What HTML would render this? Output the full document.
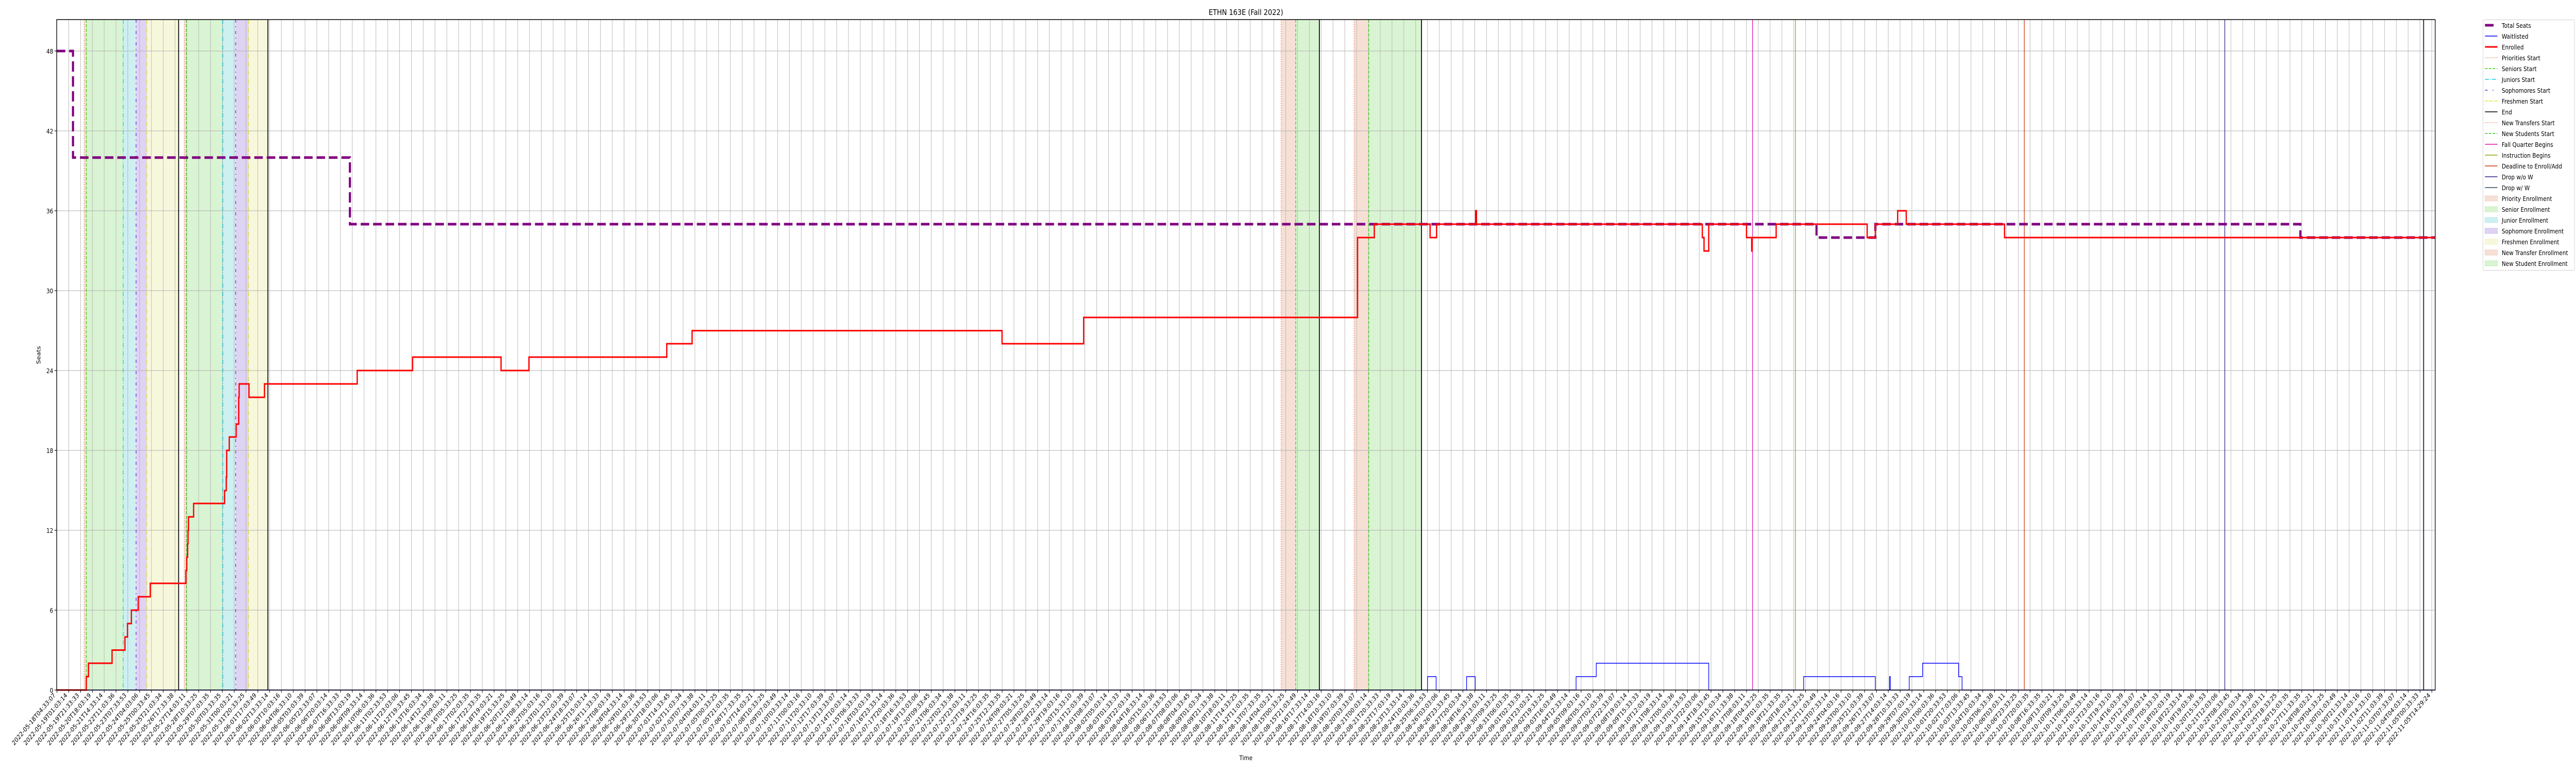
<!DOCTYPE html>
<html><head><meta charset="utf-8"><style>
html,body{margin:0;padding:0;background:#fff;overflow:hidden;width:100%;height:100%;}
svg{display:block;position:absolute;left:0;top:0;width:100vw;height:100vh;}
text{font-family:"DejaVu Sans","Liberation Sans",sans-serif;font-size:12.6px;fill:#000;}
</style></head><body>
<svg viewBox="0 0 6000 1500" preserveAspectRatio="none">
<defs>
<pattern id="vg" x="132" y="0" width="27.52" height="1500" patternUnits="userSpaceOnUse"><rect x="0" y="0" width="1" height="1500" fill="#b0b0b0"/></pattern>
<pattern id="vt" x="132" y="0" width="27.52" height="1500" patternUnits="userSpaceOnUse"><rect x="0" y="0" width="1.2" height="1500" fill="#000"/></pattern>
</defs>
<rect x="0" y="0" width="6000" height="1500" fill="#fff"/>
<g>
<rect x="196" y="38" width="5" height="1301" fill="#f6e0d6"/>
<rect x="201" y="38" width="86" height="1301" fill="#d9f4d2"/>
<rect x="287" y="38" width="30" height="1301" fill="#cdf0f1"/>
<rect x="317" y="38" width="25" height="1301" fill="#dfd3f3"/>
<rect x="342" y="38" width="74" height="1301" fill="#f7f8db"/>
<rect x="429" y="38" width="5" height="1301" fill="#f6e0d6"/>
<rect x="434" y="38" width="85" height="1301" fill="#d9f4d2"/>
<rect x="519" y="38" width="30" height="1301" fill="#cdf0f1"/>
<rect x="549" y="38" width="30" height="1301" fill="#dfd3f3"/>
<rect x="579" y="38" width="45" height="1301" fill="#f7f8db"/>
<rect x="2984" y="38" width="34" height="1301" fill="#f6e0d6"/>
<rect x="3018" y="38" width="55" height="1301" fill="#d9f4d2"/>
<rect x="3154" y="38" width="34" height="1301" fill="#f6e0d6"/>
<rect x="3188" y="38" width="123" height="1301" fill="#d9f4d2"/>
</g>
<rect x="132" y="38" width="5540" height="1301" fill="url(#vg)"/>
<g stroke="#b0b0b0" stroke-width="1">
<line x1="132" y1="1184" x2="5672" y2="1184"/>
<line x1="132" y1="1029" x2="5672" y2="1029"/>
<line x1="132" y1="874" x2="5672" y2="874"/>
<line x1="132" y1="719" x2="5672" y2="719"/>
<line x1="132" y1="564" x2="5672" y2="564"/>
<line x1="132" y1="409" x2="5672" y2="409"/>
<line x1="132" y1="254" x2="5672" y2="254"/>
<line x1="132" y1="99" x2="5672" y2="99"/>
</g>
<g fill="none" stroke-width="1.5">
<line x1="196" y1="38" x2="196" y2="1339" stroke="#ee6633" stroke-dasharray="1.5 3"/>
<line x1="201" y1="38" x2="201" y2="1339" stroke="#33cc11" stroke-dasharray="6 3"/>
<line x1="287" y1="38" x2="287" y2="1339" stroke="#11ccdd" stroke-dasharray="9 3 1.5 3"/>
<line x1="317" y1="38" x2="317" y2="1339" stroke="#6622dd" stroke-dasharray="6 7 2 7"/>
<line x1="342" y1="38" x2="342" y2="1339" stroke="#dddd22" stroke-dasharray="9 3 1.5 3"/>
<line x1="416" y1="38" x2="416" y2="1339" stroke="#000" stroke-width="2"/>
<line x1="429" y1="38" x2="429" y2="1339" stroke="#ee6633" stroke-dasharray="1.5 3"/>
<line x1="434" y1="38" x2="434" y2="1339" stroke="#33cc11" stroke-dasharray="6 3"/>
<line x1="519" y1="38" x2="519" y2="1339" stroke="#11ccdd" stroke-dasharray="9 3 1.5 3"/>
<line x1="549" y1="38" x2="549" y2="1339" stroke="#6622dd" stroke-dasharray="6 7 2 7"/>
<line x1="579" y1="38" x2="579" y2="1339" stroke="#dddd22" stroke-dasharray="9 3 1.5 3"/>
<line x1="624" y1="38" x2="624" y2="1339" stroke="#000" stroke-width="2"/>
<line x1="2984" y1="38" x2="2984" y2="1339" stroke="#ee6633" stroke-dasharray="1.5 3"/>
<line x1="3018" y1="38" x2="3018" y2="1339" stroke="#33cc11" stroke-dasharray="6 3"/>
<line x1="3073" y1="38" x2="3073" y2="1339" stroke="#000" stroke-width="2"/>
<line x1="3154" y1="38" x2="3154" y2="1339" stroke="#ee6633" stroke-dasharray="1.5 3"/>
<line x1="3188" y1="38" x2="3188" y2="1339" stroke="#33cc11" stroke-dasharray="6 3"/>
<line x1="3311" y1="38" x2="3311" y2="1339" stroke="#000" stroke-width="2"/>
<line x1="4082" y1="38" x2="4082" y2="1339" stroke="#dd11aa"/>
<line x1="4182" y1="38" x2="4182" y2="1339" stroke="#88aa11"/>
<line x1="4715" y1="38" x2="4715" y2="1339" stroke="#cc3311"/>
<line x1="5182" y1="38" x2="5182" y2="1339" stroke="#332288"/>
<line x1="5645" y1="38" x2="5645" y2="1339" stroke="#334455" stroke-width="2.5"/>
</g>
<path fill="none" stroke="#0000ff" stroke-width="1.5" d="M132 1339H3325V1313H3345V1339H3416V1313H3436V1339H3671V1313H3718V1287H3980V1339H4201V1313H4368V1339H4401V1313H4403V1339H4447V1313H4478V1287H4562V1313H4570V1339H5672"/>
<path fill="none" stroke="#800080" stroke-width="5" stroke-dasharray="20 9" d="M132 99H170V305.8H815V435H4231V461H4368V435H5358V461H5672"/>
<path fill="none" stroke="#ff0000" stroke-width="3" d="M132 1339H201V1313H206V1287H261V1261.5H291V1236H297V1210H306V1184H322V1158H350V1132H433V1107H435V1081H437V1055H438V1029H439V1003H451V977H523V952H527V926H528V874H534V848H550V823H556V771H557V745H580V771H616V745H832V719H961V693H1167V719H1232V693H1553V667H1612V641.6H2334V667H2524V616H3162V461H3201V435H3331V461H3346V435H3437V409H3439V435H3965V461H3969V487H3980V435H4068V461H4080V487H4081V461H4137V435H4349V461H4368V435H4420V409H4440V435H4669V461H5672"/>
<rect x="132" y="38" width="5540" height="1301" fill="none" stroke="#000" stroke-width="1.5"/>
<rect x="132" y="1339" width="5540" height="5" fill="url(#vt)"/>
<g stroke="#000" stroke-width="1.2">
<line x1="127" y1="1339" x2="132" y2="1339"/><line x1="127" y1="1184" x2="132" y2="1184"/><line x1="127" y1="1029" x2="132" y2="1029"/><line x1="127" y1="874" x2="132" y2="874"/><line x1="127" y1="719" x2="132" y2="719"/><line x1="127" y1="564" x2="132" y2="564"/><line x1="127" y1="409" x2="132" y2="409"/><line x1="127" y1="254" x2="132" y2="254"/><line x1="127" y1="99" x2="132" y2="99"/>
</g>
<g text-anchor="end">
<text x="124" y="1344">0</text><text x="124" y="1189">6</text><text x="124" y="1034">12</text><text x="124" y="879">18</text><text x="124" y="724">24</text><text x="124" y="569">30</text><text x="124" y="414">36</text><text x="124" y="259">42</text><text x="124" y="104">48</text>
</g>
<text x="2902" y="29" text-anchor="middle" style="font-size:15.5px">ETHN 163E (Fall 2022)</text>
<text x="2902" y="1475" text-anchor="middle">Time</text>
<text transform="translate(94,689) rotate(-90)" text-anchor="middle">Seats</text>
<rect x="5783.5" y="38.5" width="213" height="486" rx="3" fill="#fff" stroke="#d0d0d0"/>
<line x1="5788" y1="49" x2="5808" y2="49" stroke="#800080" stroke-width="5"/>
<line x1="5788" y1="70" x2="5817" y2="70" stroke="#0000ff" stroke-width="1.5"/>
<line x1="5788" y1="91" x2="5817" y2="91" stroke="#ff0000" stroke-width="3"/>
<line x1="5788" y1="112" x2="5817" y2="112" stroke="#ee6633" stroke-width="1.5" stroke-dasharray="1.5 3"/>
<line x1="5788" y1="133" x2="5817" y2="133" stroke="#33cc11" stroke-width="1.5" stroke-dasharray="6 3"/>
<line x1="5788" y1="154" x2="5817" y2="154" stroke="#11ccdd" stroke-width="1.5" stroke-dasharray="9 3 1.5 3"/>
<line x1="5788" y1="175" x2="5817" y2="175" stroke="#6622dd" stroke-width="1.5" stroke-dasharray="6 12 2 12"/>
<line x1="5788" y1="196" x2="5817" y2="196" stroke="#dddd22" stroke-width="1.5" stroke-dasharray="6 2 1.5 2"/>
<line x1="5788" y1="217" x2="5817" y2="217" stroke="#000" stroke-width="1.5"/>
<line x1="5788" y1="238" x2="5817" y2="238" stroke="#ee6633" stroke-width="1.5" stroke-dasharray="1.5 3"/>
<line x1="5788" y1="259" x2="5817" y2="259" stroke="#33cc11" stroke-width="1.5" stroke-dasharray="6 3"/>
<line x1="5788" y1="280" x2="5817" y2="280" stroke="#dd11aa" stroke-width="1.5"/>
<line x1="5788" y1="301" x2="5817" y2="301" stroke="#88aa11" stroke-width="1.5"/>
<line x1="5788" y1="322" x2="5817" y2="322" stroke="#cc3311" stroke-width="1.5"/>
<line x1="5788" y1="343" x2="5817" y2="343" stroke="#332288" stroke-width="1.5"/>
<line x1="5788" y1="364" x2="5817" y2="364" stroke="#334455" stroke-width="1.5"/>
<rect x="5788" y="380" width="29" height="10" fill="#f6e0d6" stroke="#f2cfc0"/>
<rect x="5788" y="401" width="29" height="10" fill="#d9f4d2" stroke="#c6ecbc"/>
<rect x="5788" y="422" width="29" height="10" fill="#cdf0f1" stroke="#b9e9eb"/>
<rect x="5788" y="443" width="29" height="10" fill="#dfd3f3" stroke="#cfbfee"/>
<rect x="5788" y="464" width="29" height="10" fill="#f7f8db" stroke="#eff0c4"/>
<rect x="5788" y="485" width="29" height="10" fill="#f6e0d6" stroke="#f2cfc0"/>
<rect x="5788" y="506" width="29" height="10" fill="#d9f4d2" stroke="#c6ecbc"/>
<g>
<text x="5827" y="54">Total Seats</text>
<text x="5827" y="75">Waitlisted</text>
<text x="5827" y="96">Enrolled</text>
<text x="5827" y="117">Priorities Start</text>
<text x="5827" y="138">Seniors Start</text>
<text x="5827" y="159">Juniors Start</text>
<text x="5827" y="180">Sophomores Start</text>
<text x="5827" y="201">Freshmen Start</text>
<text x="5827" y="222">End</text>
<text x="5827" y="243">New Transfers Start</text>
<text x="5827" y="264">New Students Start</text>
<text x="5827" y="285">Fall Quarter Begins</text>
<text x="5827" y="306">Instruction Begins</text>
<text x="5827" y="327">Deadline to Enroll/Add</text>
<text x="5827" y="348">Drop w/o W</text>
<text x="5827" y="369">Drop w/ W</text>
<text x="5827" y="390">Priority Enrollment</text>
<text x="5827" y="411">Senior Enrollment</text>
<text x="5827" y="432">Junior Enrollment</text>
<text x="5827" y="453">Sophomore Enrollment</text>
<text x="5827" y="474">Freshmen Enrollment</text>
<text x="5827" y="495">New Transfer Enrollment</text>
<text x="5827" y="516">New Student Enrollment</text>
</g>
<g text-anchor="end">
<g transform="translate(130,1350)">
<text transform="translate(0,0) rotate(-45)">2022-05-18T04:33:07</text>
<text transform="translate(27.5,0) rotate(-45)">2022-05-19T01:03:14</text>
<text transform="translate(55,0) rotate(-45)">2022-05-19T21:33:33</text>
<text transform="translate(82.6,0) rotate(-45)">2022-05-20T18:03:19</text>
<text transform="translate(110.1,0) rotate(-45)">2022-05-21T14:33:14</text>
<text transform="translate(137.6,0) rotate(-45)">2022-05-22T11:03:36</text>
<text transform="translate(165.1,0) rotate(-45)">2022-05-23T07:33:53</text>
<text transform="translate(192.6,0) rotate(-45)">2022-05-24T04:03:06</text>
<text transform="translate(220.2,0) rotate(-45)">2022-05-25T00:33:45</text>
<text transform="translate(247.7,0) rotate(-45)">2022-05-25T21:03:34</text>
</g>
<g transform="translate(405.2,1350)">
<text transform="translate(0,0) rotate(-45)">2022-05-26T17:33:38</text>
<text transform="translate(27.5,0) rotate(-45)">2022-05-27T14:03:11</text>
<text transform="translate(55,0) rotate(-45)">2022-05-28T10:33:25</text>
<text transform="translate(82.6,0) rotate(-45)">2022-05-29T07:03:35</text>
<text transform="translate(110.1,0) rotate(-45)">2022-05-30T03:33:35</text>
<text transform="translate(137.6,0) rotate(-45)">2022-05-31T00:03:21</text>
<text transform="translate(165.1,0) rotate(-45)">2022-05-31T20:33:25</text>
<text transform="translate(192.6,0) rotate(-45)">2022-06-01T17:03:49</text>
<text transform="translate(220.2,0) rotate(-45)">2022-06-02T13:33:14</text>
<text transform="translate(247.7,0) rotate(-45)">2022-06-03T10:03:16</text>
</g>
<g transform="translate(680.4,1350)">
<text transform="translate(0,0) rotate(-45)">2022-06-04T06:33:10</text>
<text transform="translate(27.5,0) rotate(-45)">2022-06-05T03:03:39</text>
<text transform="translate(55,0) rotate(-45)">2022-06-05T23:33:07</text>
<text transform="translate(82.6,0) rotate(-45)">2022-06-06T20:03:14</text>
<text transform="translate(110.1,0) rotate(-45)">2022-06-07T16:33:33</text>
<text transform="translate(137.6,0) rotate(-45)">2022-06-08T13:03:19</text>
<text transform="translate(165.1,0) rotate(-45)">2022-06-09T09:33:14</text>
<text transform="translate(192.6,0) rotate(-45)">2022-06-10T06:03:36</text>
<text transform="translate(220.2,0) rotate(-45)">2022-06-11T02:33:53</text>
<text transform="translate(247.7,0) rotate(-45)">2022-06-11T23:03:06</text>
</g>
<g transform="translate(955.6,1350)">
<text transform="translate(0,0) rotate(-45)">2022-06-12T19:33:45</text>
<text transform="translate(27.5,0) rotate(-45)">2022-06-13T16:03:34</text>
<text transform="translate(55,0) rotate(-45)">2022-06-14T12:33:38</text>
<text transform="translate(82.6,0) rotate(-45)">2022-06-15T09:03:11</text>
<text transform="translate(110.1,0) rotate(-45)">2022-06-16T05:33:25</text>
<text transform="translate(137.6,0) rotate(-45)">2022-06-17T02:03:35</text>
<text transform="translate(165.1,0) rotate(-45)">2022-06-17T22:33:35</text>
<text transform="translate(192.6,0) rotate(-45)">2022-06-18T19:03:21</text>
<text transform="translate(220.2,0) rotate(-45)">2022-06-19T15:33:25</text>
<text transform="translate(247.7,0) rotate(-45)">2022-06-20T12:03:49</text>
</g>
<g transform="translate(1230.8,1350)">
<text transform="translate(0,0) rotate(-45)">2022-06-21T08:33:14</text>
<text transform="translate(27.5,0) rotate(-45)">2022-06-22T05:03:16</text>
<text transform="translate(55,0) rotate(-45)">2022-06-23T01:33:10</text>
<text transform="translate(82.6,0) rotate(-45)">2022-06-23T22:03:39</text>
<text transform="translate(110.1,0) rotate(-45)">2022-06-24T18:33:07</text>
<text transform="translate(137.6,0) rotate(-45)">2022-06-25T15:03:14</text>
<text transform="translate(165.1,0) rotate(-45)">2022-06-26T11:33:33</text>
<text transform="translate(192.6,0) rotate(-45)">2022-06-27T08:03:19</text>
<text transform="translate(220.2,0) rotate(-45)">2022-06-28T04:33:14</text>
<text transform="translate(247.7,0) rotate(-45)">2022-06-29T01:03:36</text>
</g>
<g transform="translate(1506,1350)">
<text transform="translate(0,0) rotate(-45)">2022-06-29T21:33:53</text>
<text transform="translate(27.5,0) rotate(-45)">2022-06-30T18:03:06</text>
<text transform="translate(55,0) rotate(-45)">2022-07-01T14:33:45</text>
<text transform="translate(82.6,0) rotate(-45)">2022-07-02T11:03:34</text>
<text transform="translate(110.1,0) rotate(-45)">2022-07-03T07:33:38</text>
<text transform="translate(137.6,0) rotate(-45)">2022-07-04T04:03:11</text>
<text transform="translate(165.1,0) rotate(-45)">2022-07-05T00:33:25</text>
<text transform="translate(192.6,0) rotate(-45)">2022-07-05T21:03:35</text>
<text transform="translate(220.2,0) rotate(-45)">2022-07-06T17:33:35</text>
<text transform="translate(247.7,0) rotate(-45)">2022-07-07T14:03:21</text>
</g>
<g transform="translate(1781.2,1350)">
<text transform="translate(0,0) rotate(-45)">2022-07-08T10:33:25</text>
<text transform="translate(27.5,0) rotate(-45)">2022-07-09T07:03:49</text>
<text transform="translate(55,0) rotate(-45)">2022-07-10T03:33:14</text>
<text transform="translate(82.6,0) rotate(-45)">2022-07-11T00:03:16</text>
<text transform="translate(110.1,0) rotate(-45)">2022-07-11T20:33:10</text>
<text transform="translate(137.6,0) rotate(-45)">2022-07-12T17:03:39</text>
<text transform="translate(165.1,0) rotate(-45)">2022-07-13T13:33:07</text>
<text transform="translate(192.6,0) rotate(-45)">2022-07-14T10:03:14</text>
<text transform="translate(220.2,0) rotate(-45)">2022-07-15T06:33:33</text>
<text transform="translate(247.7,0) rotate(-45)">2022-07-16T03:03:19</text>
</g>
<g transform="translate(2056.4,1350)">
<text transform="translate(0,0) rotate(-45)">2022-07-16T23:33:14</text>
<text transform="translate(27.5,0) rotate(-45)">2022-07-17T20:03:36</text>
<text transform="translate(55,0) rotate(-45)">2022-07-18T16:33:53</text>
<text transform="translate(82.6,0) rotate(-45)">2022-07-19T13:03:06</text>
<text transform="translate(110.1,0) rotate(-45)">2022-07-20T09:33:45</text>
<text transform="translate(137.6,0) rotate(-45)">2022-07-21T06:03:34</text>
<text transform="translate(165.1,0) rotate(-45)">2022-07-22T02:33:38</text>
<text transform="translate(192.6,0) rotate(-45)">2022-07-22T23:03:11</text>
<text transform="translate(220.2,0) rotate(-45)">2022-07-23T19:33:25</text>
<text transform="translate(247.7,0) rotate(-45)">2022-07-24T16:03:35</text>
</g>
<g transform="translate(2331.6,1350)">
<text transform="translate(0,0) rotate(-45)">2022-07-25T12:33:35</text>
<text transform="translate(27.5,0) rotate(-45)">2022-07-26T09:03:21</text>
<text transform="translate(55,0) rotate(-45)">2022-07-27T05:33:25</text>
<text transform="translate(82.6,0) rotate(-45)">2022-07-28T02:03:49</text>
<text transform="translate(110.1,0) rotate(-45)">2022-07-28T22:33:14</text>
<text transform="translate(137.6,0) rotate(-45)">2022-07-29T19:03:16</text>
<text transform="translate(165.1,0) rotate(-45)">2022-07-30T15:33:10</text>
<text transform="translate(192.6,0) rotate(-45)">2022-07-31T12:03:39</text>
<text transform="translate(220.2,0) rotate(-45)">2022-08-01T08:33:07</text>
<text transform="translate(247.7,0) rotate(-45)">2022-08-02T05:03:14</text>
</g>
<g transform="translate(2606.8,1350)">
<text transform="translate(0,0) rotate(-45)">2022-08-03T01:33:33</text>
<text transform="translate(27.5,0) rotate(-45)">2022-08-03T22:03:19</text>
<text transform="translate(55,0) rotate(-45)">2022-08-04T18:33:14</text>
<text transform="translate(82.6,0) rotate(-45)">2022-08-05T15:03:36</text>
<text transform="translate(110.1,0) rotate(-45)">2022-08-06T11:33:53</text>
<text transform="translate(137.6,0) rotate(-45)">2022-08-07T08:03:06</text>
<text transform="translate(165.1,0) rotate(-45)">2022-08-08T04:33:45</text>
<text transform="translate(192.6,0) rotate(-45)">2022-08-09T01:03:34</text>
<text transform="translate(220.2,0) rotate(-45)">2022-08-09T21:33:38</text>
<text transform="translate(247.7,0) rotate(-45)">2022-08-10T18:03:11</text>
</g>
<g transform="translate(2882,1350)">
<text transform="translate(0,0) rotate(-45)">2022-08-11T14:33:25</text>
<text transform="translate(27.5,0) rotate(-45)">2022-08-12T11:03:35</text>
<text transform="translate(55,0) rotate(-45)">2022-08-13T07:33:35</text>
<text transform="translate(82.6,0) rotate(-45)">2022-08-14T04:03:21</text>
<text transform="translate(110.1,0) rotate(-45)">2022-08-15T00:33:25</text>
<text transform="translate(137.6,0) rotate(-45)">2022-08-15T21:03:49</text>
<text transform="translate(165.1,0) rotate(-45)">2022-08-16T17:33:14</text>
<text transform="translate(192.6,0) rotate(-45)">2022-08-17T14:03:16</text>
<text transform="translate(220.2,0) rotate(-45)">2022-08-18T10:33:10</text>
<text transform="translate(247.7,0) rotate(-45)">2022-08-19T07:03:39</text>
</g>
<g transform="translate(3157.2,1350)">
<text transform="translate(0,0) rotate(-45)">2022-08-20T03:33:07</text>
<text transform="translate(27.5,0) rotate(-45)">2022-08-21T00:03:14</text>
<text transform="translate(55,0) rotate(-45)">2022-08-21T20:33:33</text>
<text transform="translate(82.6,0) rotate(-45)">2022-08-22T17:03:19</text>
<text transform="translate(110.1,0) rotate(-45)">2022-08-23T13:33:14</text>
<text transform="translate(137.6,0) rotate(-45)">2022-08-24T10:03:36</text>
<text transform="translate(165.1,0) rotate(-45)">2022-08-25T06:33:53</text>
<text transform="translate(192.6,0) rotate(-45)">2022-08-26T03:03:06</text>
<text transform="translate(220.2,0) rotate(-45)">2022-08-26T23:33:45</text>
<text transform="translate(247.7,0) rotate(-45)">2022-08-27T20:03:34</text>
</g>
<g transform="translate(3432.4,1350)">
<text transform="translate(0,0) rotate(-45)">2022-08-28T16:33:38</text>
<text transform="translate(27.5,0) rotate(-45)">2022-08-29T13:03:11</text>
<text transform="translate(55,0) rotate(-45)">2022-08-30T09:33:25</text>
<text transform="translate(82.6,0) rotate(-45)">2022-08-31T06:03:35</text>
<text transform="translate(110.1,0) rotate(-45)">2022-09-01T02:33:35</text>
<text transform="translate(137.6,0) rotate(-45)">2022-09-01T23:03:21</text>
<text transform="translate(165.1,0) rotate(-45)">2022-09-02T19:33:25</text>
<text transform="translate(192.6,0) rotate(-45)">2022-09-03T16:03:49</text>
<text transform="translate(220.2,0) rotate(-45)">2022-09-04T12:33:14</text>
<text transform="translate(247.7,0) rotate(-45)">2022-09-05T09:03:16</text>
</g>
<g transform="translate(3707.6,1350)">
<text transform="translate(0,0) rotate(-45)">2022-09-06T05:33:10</text>
<text transform="translate(27.5,0) rotate(-45)">2022-09-07T02:03:39</text>
<text transform="translate(55,0) rotate(-45)">2022-09-07T22:33:07</text>
<text transform="translate(82.6,0) rotate(-45)">2022-09-08T19:03:14</text>
<text transform="translate(110.1,0) rotate(-45)">2022-09-09T15:33:33</text>
<text transform="translate(137.6,0) rotate(-45)">2022-09-10T12:03:19</text>
<text transform="translate(165.1,0) rotate(-45)">2022-09-11T08:33:14</text>
<text transform="translate(192.6,0) rotate(-45)">2022-09-12T05:03:36</text>
<text transform="translate(220.2,0) rotate(-45)">2022-09-13T01:33:53</text>
<text transform="translate(247.7,0) rotate(-45)">2022-09-13T22:03:06</text>
</g>
<g transform="translate(3982.8,1350)">
<text transform="translate(0,0) rotate(-45)">2022-09-14T18:33:45</text>
<text transform="translate(27.5,0) rotate(-45)">2022-09-15T15:03:34</text>
<text transform="translate(55,0) rotate(-45)">2022-09-16T11:33:38</text>
<text transform="translate(82.6,0) rotate(-45)">2022-09-17T08:03:11</text>
<text transform="translate(110.1,0) rotate(-45)">2022-09-18T04:33:25</text>
<text transform="translate(137.6,0) rotate(-45)">2022-09-19T01:03:35</text>
<text transform="translate(165.1,0) rotate(-45)">2022-09-19T21:33:35</text>
<text transform="translate(192.6,0) rotate(-45)">2022-09-20T18:03:21</text>
<text transform="translate(220.2,0) rotate(-45)">2022-09-21T14:33:25</text>
<text transform="translate(247.7,0) rotate(-45)">2022-09-22T11:03:49</text>
</g>
<g transform="translate(4258,1350)">
<text transform="translate(0,0) rotate(-45)">2022-09-23T07:33:14</text>
<text transform="translate(27.5,0) rotate(-45)">2022-09-24T04:03:16</text>
<text transform="translate(55,0) rotate(-45)">2022-09-25T00:33:10</text>
<text transform="translate(82.6,0) rotate(-45)">2022-09-25T21:03:39</text>
<text transform="translate(110.1,0) rotate(-45)">2022-09-26T17:33:07</text>
<text transform="translate(137.6,0) rotate(-45)">2022-09-27T14:03:14</text>
<text transform="translate(165.1,0) rotate(-45)">2022-09-28T10:33:33</text>
<text transform="translate(192.6,0) rotate(-45)">2022-09-29T07:03:19</text>
<text transform="translate(220.2,0) rotate(-45)">2022-09-30T03:33:14</text>
<text transform="translate(247.7,0) rotate(-45)">2022-10-01T00:03:36</text>
</g>
<g transform="translate(4533.2,1350)">
<text transform="translate(0,0) rotate(-45)">2022-10-01T20:33:53</text>
<text transform="translate(27.5,0) rotate(-45)">2022-10-02T17:03:06</text>
<text transform="translate(55,0) rotate(-45)">2022-10-03T13:33:45</text>
<text transform="translate(82.6,0) rotate(-45)">2022-10-04T10:03:34</text>
<text transform="translate(110.1,0) rotate(-45)">2022-10-05T06:33:38</text>
<text transform="translate(137.6,0) rotate(-45)">2022-10-06T03:03:11</text>
<text transform="translate(165.1,0) rotate(-45)">2022-10-06T23:33:25</text>
<text transform="translate(192.6,0) rotate(-45)">2022-10-07T20:03:35</text>
<text transform="translate(220.2,0) rotate(-45)">2022-10-08T16:33:35</text>
<text transform="translate(247.7,0) rotate(-45)">2022-10-09T13:03:21</text>
</g>
<g transform="translate(4808.4,1350)">
<text transform="translate(0,0) rotate(-45)">2022-10-10T09:33:25</text>
<text transform="translate(27.5,0) rotate(-45)">2022-10-11T06:03:49</text>
<text transform="translate(55,0) rotate(-45)">2022-10-12T02:33:14</text>
<text transform="translate(82.6,0) rotate(-45)">2022-10-12T23:03:16</text>
<text transform="translate(110.1,0) rotate(-45)">2022-10-13T19:33:10</text>
<text transform="translate(137.6,0) rotate(-45)">2022-10-14T16:03:39</text>
<text transform="translate(165.1,0) rotate(-45)">2022-10-15T12:33:07</text>
<text transform="translate(192.6,0) rotate(-45)">2022-10-16T09:03:14</text>
<text transform="translate(220.2,0) rotate(-45)">2022-10-17T05:33:33</text>
<text transform="translate(247.7,0) rotate(-45)">2022-10-18T02:03:19</text>
</g>
<g transform="translate(5083.6,1350)">
<text transform="translate(0,0) rotate(-45)">2022-10-18T22:33:14</text>
<text transform="translate(27.5,0) rotate(-45)">2022-10-19T19:03:36</text>
<text transform="translate(55,0) rotate(-45)">2022-10-20T15:33:53</text>
<text transform="translate(82.6,0) rotate(-45)">2022-10-21T12:03:06</text>
<text transform="translate(110.1,0) rotate(-45)">2022-10-22T08:33:45</text>
<text transform="translate(137.6,0) rotate(-45)">2022-10-23T05:03:34</text>
<text transform="translate(165.1,0) rotate(-45)">2022-10-24T01:33:38</text>
<text transform="translate(192.6,0) rotate(-45)">2022-10-24T22:03:11</text>
<text transform="translate(220.2,0) rotate(-45)">2022-10-25T18:33:25</text>
<text transform="translate(247.7,0) rotate(-45)">2022-10-26T15:03:35</text>
</g>
<g transform="translate(5358.8,1350)">
<text transform="translate(0,0) rotate(-45)">2022-10-27T11:33:35</text>
<text transform="translate(27.5,0) rotate(-45)">2022-10-28T08:03:21</text>
<text transform="translate(55,0) rotate(-45)">2022-10-29T04:33:25</text>
<text transform="translate(82.6,0) rotate(-45)">2022-10-30T01:03:49</text>
<text transform="translate(110.1,0) rotate(-45)">2022-10-30T21:33:14</text>
<text transform="translate(137.6,0) rotate(-45)">2022-10-31T18:03:16</text>
<text transform="translate(165.1,0) rotate(-45)">2022-11-01T14:33:10</text>
<text transform="translate(192.6,0) rotate(-45)">2022-11-02T11:03:39</text>
<text transform="translate(220.2,0) rotate(-45)">2022-11-03T07:33:07</text>
<text transform="translate(247.7,0) rotate(-45)">2022-11-04T04:03:14</text>
</g>
<g transform="translate(5634,1350)">
<text transform="translate(0,0) rotate(-45)">2022-11-05T00:33:33</text>
<text transform="translate(27.5,0) rotate(-45)">2022-11-05T14:29:24</text>
</g>
</g>
</svg>
</body></html>
